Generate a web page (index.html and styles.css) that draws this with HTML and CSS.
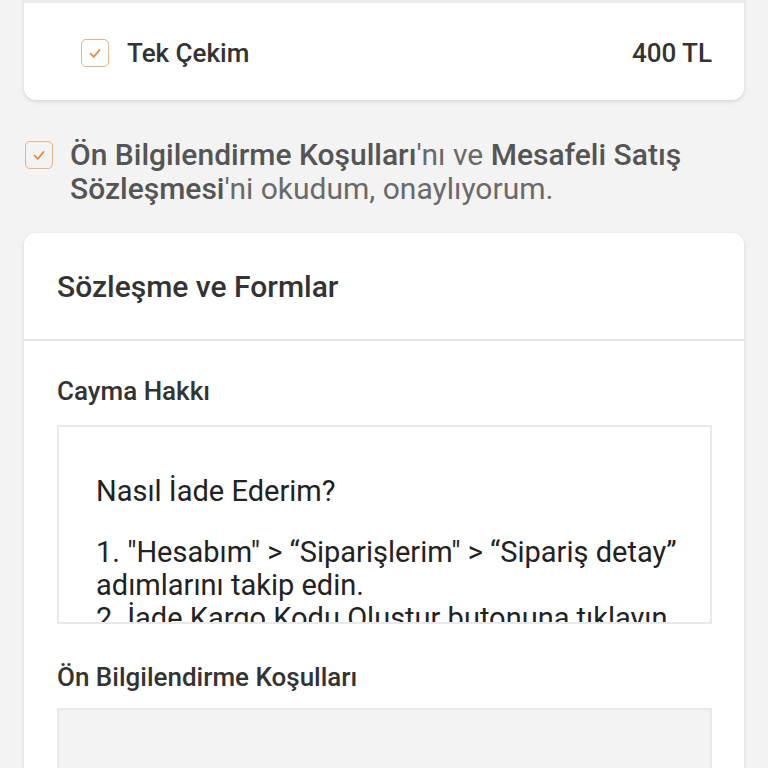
FILE: index.html
```html
<!DOCTYPE html>
<html lang="tr">
<head>
<meta charset="utf-8">
<link rel="stylesheet" href="styles.css">
</head>
<body>
<div class="page">
  <div class="card card-top">
    <div class="card-top-cap"></div>
    <div class="option-row">
      <span class="check"><svg viewBox="0 0 26 26" width="26" height="26"><path d="M8.5 13.5l3.2 3.4 5.8-7" fill="none" stroke="#e9822e" stroke-width="1.6" stroke-linecap="round" stroke-linejoin="round"/></svg></span>
      <span class="option-label">Tek Çekim</span>
      <span class="option-price">400 TL</span>
    </div>
  </div>

  <div class="agree">
    <span class="check"><svg viewBox="0 0 26 26" width="26" height="26"><path d="M8.5 13.5l3.2 3.4 5.8-7" fill="none" stroke="#e9822e" stroke-width="1.6" stroke-linecap="round" stroke-linejoin="round"/></svg></span>
    <p class="agree-text"><b>Ön Bilgilendirme Koşulları</b>'nı ve <b>Mesafeli Satış Sözleşmesi</b>'ni okudum, onaylıyorum.</p>
  </div>

  <div class="card card-forms">
    <div class="forms-head">Sözleşme ve Formlar</div>
    <div class="forms-body">
      <div class="form-title">Cayma Hakkı</div>
      <div class="doc-box">
        <p class="doc-p doc-first">Nasıl İade Ederim?</p>
        <p class="doc-p">1. "Hesabım" &gt; “Siparişlerim" &gt; “Sipariş detay” adımlarını takip edin.<br>2. İade Kargo Kodu Oluştur butonuna tıklayın.</p>
      </div>
      <div class="form-title form-title-2">Ön Bilgilendirme Koşulları</div>
      <div class="doc-box doc-empty"></div>
    </div>
  </div>
</div>
</body>
</html>
```

FILE: styles.css
```css
html, body {
  margin: 0;
  padding: 0;
  background: #f3f3f3;
  font-family: Roboto, "Noto Sans", sans-serif;
  overflow: hidden;
  height: 768px;
}
.page {
  padding: 0 24px;
}
.card {
  background: #fff;
  border-radius: 12px;
  box-shadow: 0 2px 4px rgba(0,0,0,0.10), 0 0 2px rgba(0,0,0,0.06);
  width: 720px;
}
.card-top {
  margin-top: -20px;
  height: 120px;
  display: flex;
  flex-direction: column;
}
.card-top-cap {
  height: 20px;
  border-bottom: 3px solid #ececec;
  flex: none;
}
.option-row {
  flex: 1;
  display: flex;
  align-items: center;
  padding: 2px 32px 0 57px;
}
.check {
  width: 26px;
  height: 26px;
  border: 1.5px solid #e5b387;
  border-radius: 5px;
  display: flex;
  align-items: center;
  justify-content: center;
  flex: none;
  background: #fff;
}
.check svg {
  width: 26px;
  height: 26px;
}
.option-label {
  margin-left: 18px;
  font-size: 26px;
  font-weight: 500;
  color: #333;
  flex: 1;
}
.option-price {
  font-size: 26px;
  font-weight: 500;
  color: #333;
}
.agree {
  display: flex;
  align-items: flex-start;
  padding: 41px 0 0 1px;
  gap: 17px;
  height: 92px;
}
.agree .check {
  background: transparent;
}
.agree-text {
  margin: -3px 0 0;
  font-size: 30px;
  line-height: 34px;
  color: #6a6a6a;
  width: 660px;
}
.agree-text b {
  font-weight: 500;
  color: #555;
}
.card-forms {
  height: 560px;
}
.forms-head {
  height: 108px;
  display: flex;
  align-items: center;
  padding: 0 0 0 33px;
  box-sizing: border-box;
  font-size: 30px;
  font-weight: 500;
  color: #333;
  border-bottom: 2px solid #e8e8e8;
}
.forms-body {
  padding: 0 32px 0 33px;
}
.form-title {
  height: 84px;
  box-sizing: border-box;
  display: flex;
  align-items: center;
  padding-top: 15px;
  font-size: 26px;
  font-weight: 500;
  color: #333;
}
.doc-box {
  height: 195px;
  border: 2px solid #e9e9e9;
  background: #fff;
  overflow: hidden;
  padding: 0 8px 0 37px;
}
.doc-p {
  margin: 0;
  font-size: 29px;
  line-height: 33px;
  color: #222;
}
.doc-first {
  margin-top: 48px;
  margin-bottom: 28px;
}
.form-title-2 {
  height: 84px;
  padding-top: 22px;
}
.doc-empty {
  background: #f3f3f3;
  height: 100px;
}
```
